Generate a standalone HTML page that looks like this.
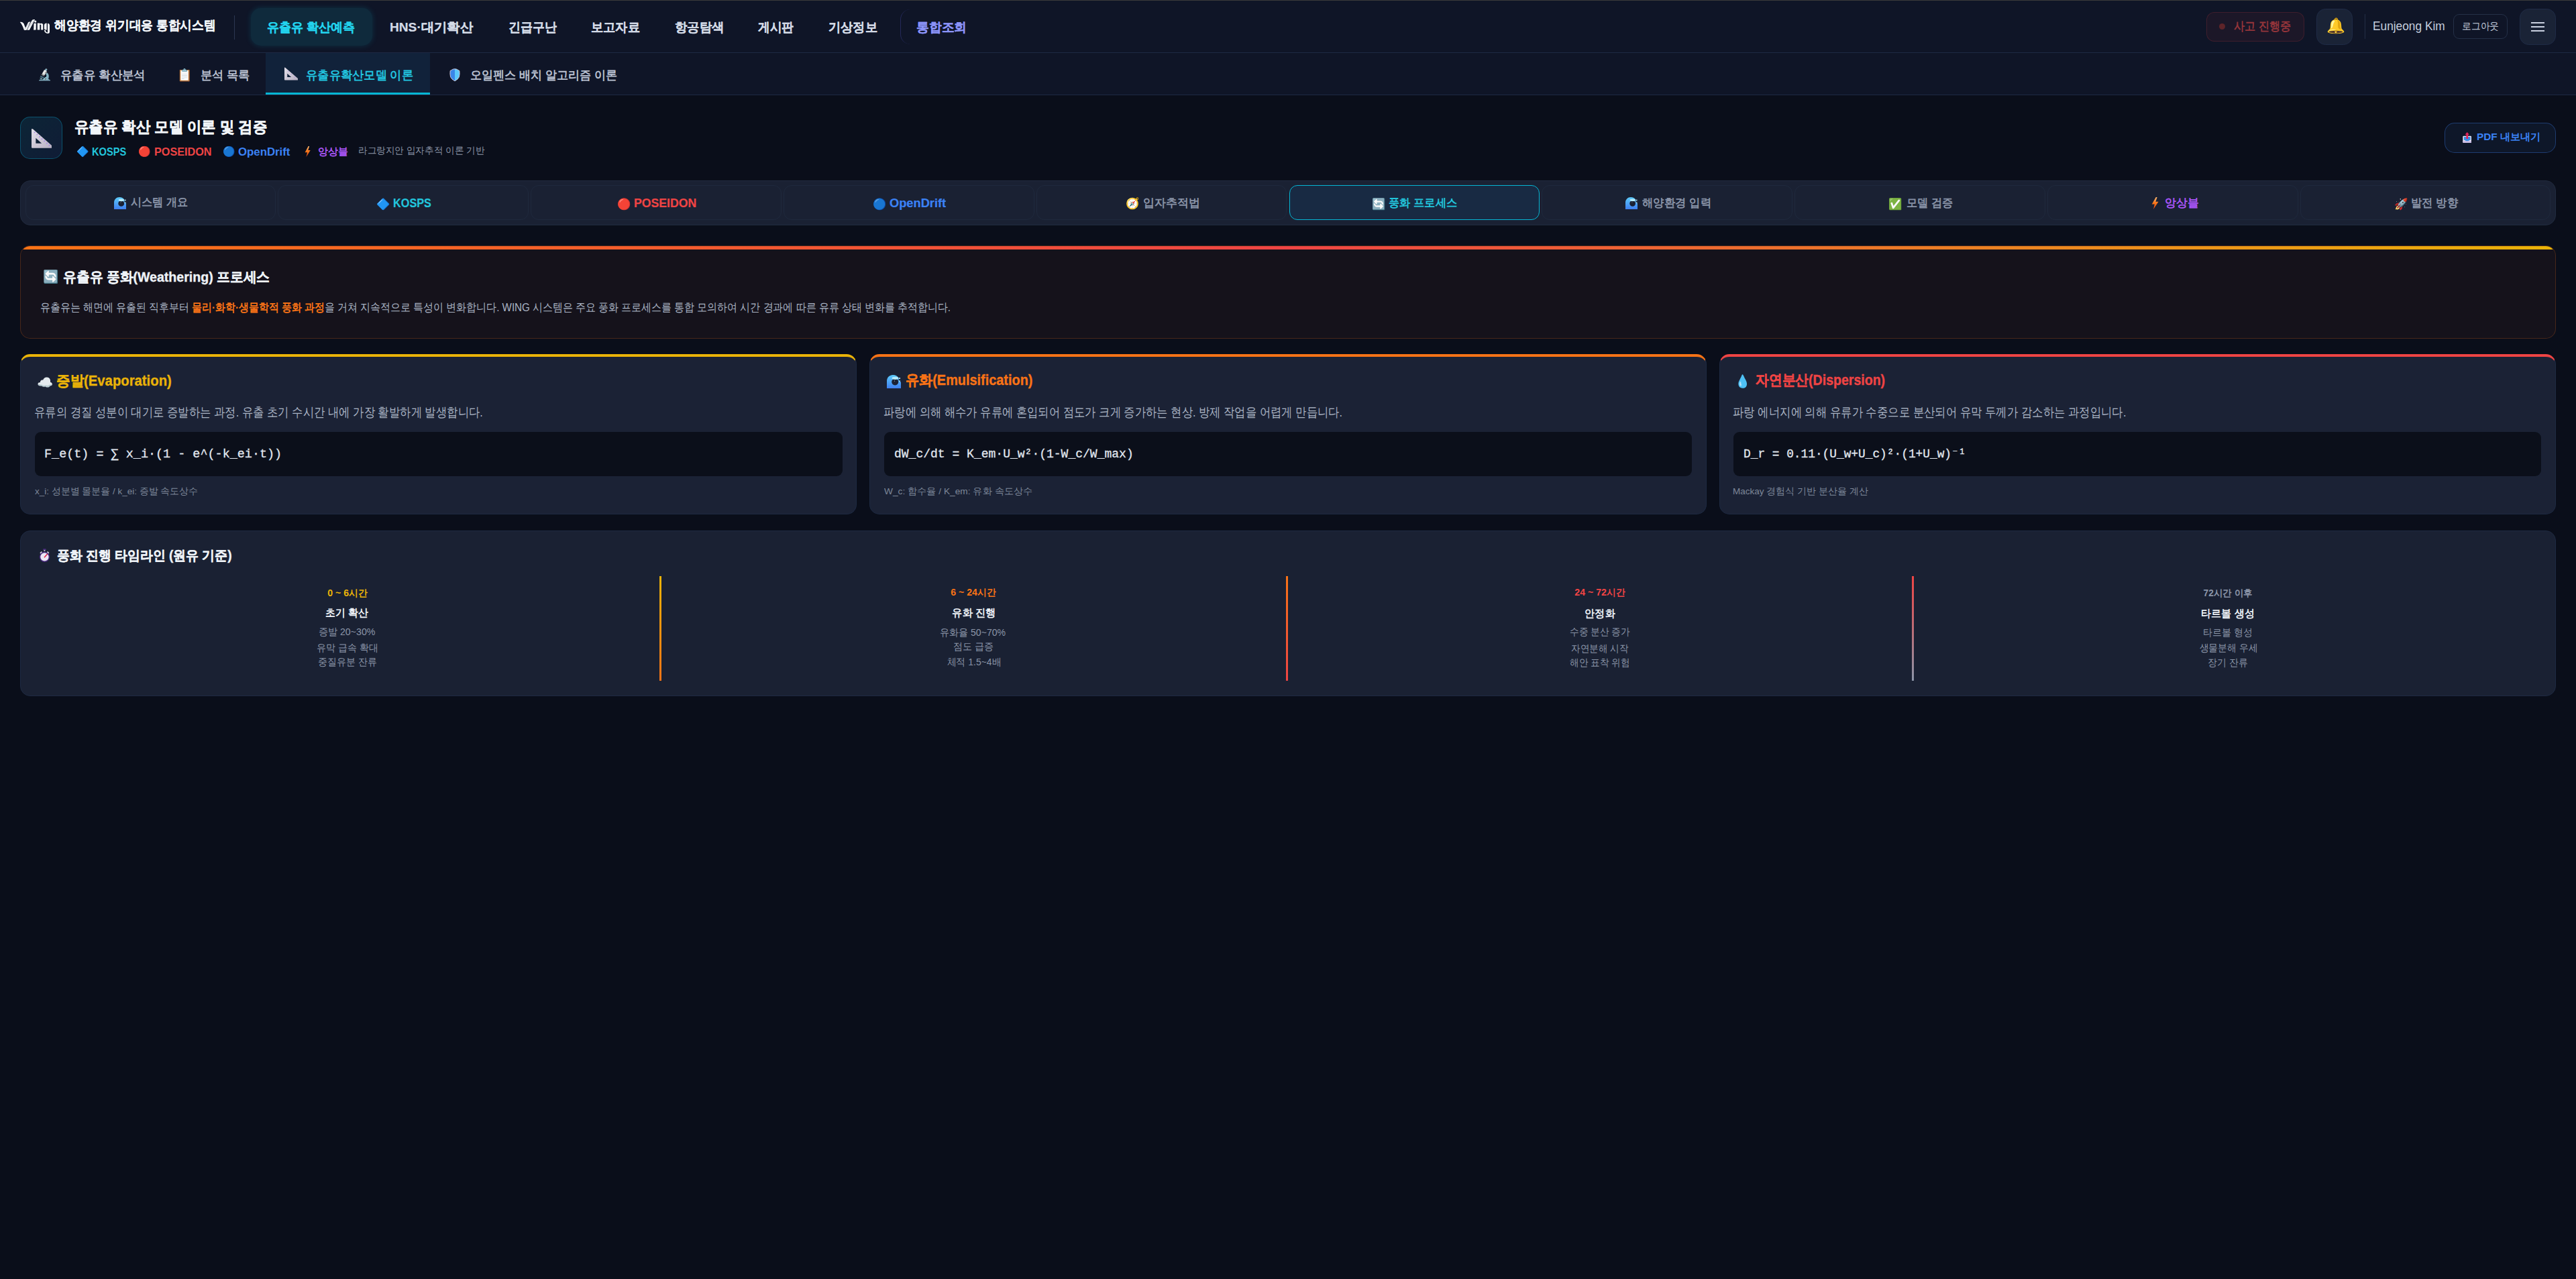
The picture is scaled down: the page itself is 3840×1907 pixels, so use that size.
<!DOCTYPE html>
<html lang="ko">
<head>
<meta charset="utf-8">
<title>WING 유출유 확산 모델 이론 및 검증</title>
<style>
html{zoom:1.5;}
*{box-sizing:border-box;margin:0;padding:0;}
body{width:2560px;height:1271.4px;overflow:hidden;background:#0a0e1a;font-family:"Liberation Sans",sans-serif;color:#e2e8f0;position:relative;}
.abs{position:absolute;}
.t{position:absolute;white-space:nowrap;}
#topline{position:absolute;left:0;top:0;width:2560px;height:0.67px;background:#3b3b3b;z-index:5;}
#hdr{position:absolute;left:0;top:0;width:2560px;height:52.7px;background:#0f1527;border-bottom:1px solid #1d2944;}
#subnav{position:absolute;left:0;top:52.7px;width:2560px;height:41.7px;background:#0f1527;border-bottom:1px solid #1d2944;}
.tab{position:absolute;top:184.3px;width:249.2px;height:34.7px;border-radius:8px;border:1px solid #1f293d;}
.tab.act{border-color:#06b6d4;background:#182a43;}
.card{position:absolute;top:352px;width:831.6px;height:159px;border-radius:10px;border:1px solid #1e2a42;border-top:3px solid;background:#1b2235;}
.code{position:absolute;top:429.5px;width:802.7px;height:43.7px;border-radius:6px;background:#0b0f1a;}
.tline{position:absolute;top:572.4px;width:2px;height:104.6px;}
</style>
</head>
<body>
<div id="topline"></div>
<div id="hdr">
  <svg class="abs" style="left:17.33px;top:16px" width="36" height="20" viewBox="0 0 2302 1279">
    <g fill="#f8fafc">
      <path d="M160,385 C240,360 330,380 400,470 L560,870 C520,895 460,900 420,885 C360,700 290,520 160,385 Z"/>
      <path d="M440,880 L580,880 L830,365 C780,350 730,360 690,385 Z"/>
      <path d="M600,885 L760,880 C880,660 1000,420 1115,225 C1050,200 980,215 940,250 C830,440 700,690 600,885 Z"/>
      <circle cx="1140" cy="345" r="68"/>
      <path d="M1045,455 L1185,455 L1175,875 L1030,885 Z"/>
      <path d="M1270,450 L1420,450 L1420,485 Q1530,420 1630,520 L1630,875 L1500,875 L1500,580 Q1470,520 1420,545 L1420,875 L1270,875 Z"/>
      <path d="M1860,445 Q1700,450 1700,600 L1700,800 Q1710,880 1860,885 Z"/>
      <path d="M1920,455 Q2040,470 2045,560 L2045,1020 Q2040,1105 1930,1105 Q1720,1105 1700,900 L1780,900 Q1800,1040 1920,1040 Z"/>
    </g>
    <g stroke="#0f1527" stroke-width="12" fill="none" opacity="0.8">
      <path d="M430,870 L800,380"/><path d="M610,880 L1060,250"/>
    </g>
  </svg>
  <div class="abs" style="left:232.5px;top:15px;width:1px;height:24px;background:#2b3752"></div>
  <div class="abs" style="left:249px;top:8px;width:121px;height:37px;border-radius:10px;background:#0f2a3c;box-shadow:0 0 6px rgba(6,182,212,0.18)"></div>
  <div class="abs" style="left:894.5px;top:9px;width:20px;height:35px;border-left:1px solid rgba(99,102,241,0.25);border-radius:10px 0 0 10px"></div>
  <div class="abs" style="left:2192.6px;top:12px;width:97.3px;height:29px;border:1px solid rgba(239,68,68,0.17);background:rgba(239,68,68,0.06);border-radius:8px"></div>
  <div class="abs" style="left:2205.5px;top:23.2px;width:6px;height:6px;border-radius:50%;background:#5e2429"></div>
  <div class="abs" style="left:2302px;top:8.6px;width:36px;height:36px;border-radius:9px;background:#1a2336;border:1px solid #1f2b46"></div>
  <div class="abs" style="left:2350.3px;top:14px;width:0.67px;height:24.5px;background:#222d45"></div>
  <div class="abs" style="left:2438px;top:14px;width:54px;height:24.5px;border-radius:6px;border:1px solid #243047"></div>
  <div class="abs" style="left:2504px;top:8.6px;width:36px;height:36px;border-radius:9px;background:#1a2336;border:1px solid #1f2b46"></div>
  <div class="abs" style="left:2515.2px;top:22.2px;width:13.7px;height:1.3px;background:#c9d0e0"></div>
  <div class="abs" style="left:2515.2px;top:25.9px;width:13.7px;height:1.3px;background:#c9d0e0"></div>
  <div class="abs" style="left:2515.2px;top:30.0px;width:13.7px;height:1.3px;background:#c9d0e0"></div>
</div>
<div id="subnav">
  <div class="abs" style="left:263.9px;top:0;width:163.4px;height:40.7px;background:#11223a"></div>
  <div class="abs" style="left:263.9px;top:39.2px;width:163.4px;height:2px;background:#06b6d4"></div>
</div>

<!-- page header -->
<div class="abs" style="left:20px;top:116px;width:42px;height:42px;border-radius:10px;border:1px solid rgba(8,145,178,0.45);background:linear-gradient(135deg,#0c2536,#101c36)"></div>
<div class="abs" style="left:2429.3px;top:122px;width:110.7px;height:30px;border-radius:10px;border:1px solid rgba(59,130,246,0.35);background:#0e1729"></div>

<!-- tab bar -->
<div class="abs" style="left:20px;top:179.3px;width:2520px;height:44.7px;border-radius:10px;border:1px solid #212b3f;background:#1a2133"></div>
<div class="tab" style="left:25px"></div>
<div class="tab" style="left:276.2px"></div>
<div class="tab" style="left:527.4px"></div>
<div class="tab" style="left:778.6px"></div>
<div class="tab" style="left:1029.8px"></div>
<div class="tab act" style="left:1281px"></div>
<div class="tab" style="left:1532.2px"></div>
<div class="tab" style="left:1783.4px"></div>
<div class="tab" style="left:2034.6px"></div>
<div class="tab" style="left:2285.8px"></div>

<!-- banner -->
<div class="abs" style="left:20px;top:244.2px;width:2520px;height:92.2px;border-radius:10px;border:1px solid rgba(249,115,22,0.22);background:#15121b;overflow:hidden">
  <div class="abs" style="left:0;top:0;width:100%;height:3px;background:linear-gradient(90deg,#f97316,#ef4444 50%,#eab308)"></div>
</div>

<!-- cards -->
<div class="card" style="left:20px;border-top-color:#eab308"></div>
<div class="card" style="left:864.2px;border-top-color:#f97316"></div>
<div class="card" style="left:1708.4px;border-top-color:#ef4444"></div>
<div class="code" style="left:34.5px"></div>
<div class="code" style="left:878.7px"></div>
<div class="code" style="left:1722.9px"></div>

<!-- timeline -->
<div class="abs" style="left:20px;top:527.3px;width:2520px;height:164.5px;border-radius:10px;background:#1a2133;border:1px solid #1e2a42"></div>
<div class="tline" style="left:655.3px;background:linear-gradient(#eab308,#f97316)"></div>
<div class="tline" style="left:1277.7px;background:linear-gradient(#f97316,#ef4444)"></div>
<div class="tline" style="left:1900.2px;background:linear-gradient(#ef4444,#8b95a8)"></div>


<!-- svg icons -->
<svg class="abs" style="left:31.07px;top:127.33px" width="20.2" height="19.8" viewBox="0 0 100 100" preserveAspectRatio="none">
  <defs><linearGradient id="tg1" x1="0" y1="0" x2="1" y2="1"><stop offset="0" stop-color="#e4e0ea"/><stop offset="1" stop-color="#b7b0c2"/></linearGradient></defs>
  <path d="M0,8 Q0,0 7,5 L98,86 Q100,90 100,94 L100,100 L4,100 Q0,100 0,96 Z M21,50 L21,77 L50,77 Z" fill="url(#tg1)" fill-rule="evenodd"/>
  <g stroke="#9f7aea" stroke-width="3.5"><path d="M18,19 L13,24"/><path d="M30,30 L25,35"/><path d="M42,41 L37,46"/><path d="M54,52 L49,57"/><path d="M66,63 L61,68"/><path d="M78,74 L73,79"/><path d="M90,85 L85,90"/></g>
</svg>
<svg class="abs" style="left:282.6px;top:66.87px" width="13.53" height="13.07" viewBox="0 0 100 100" preserveAspectRatio="none">
  <path d="M0,8 Q0,0 7,5 L98,86 Q100,90 100,94 L100,100 L4,100 Q0,100 0,96 Z M21,50 L21,77 L50,77 Z" fill="url(#tg1)" fill-rule="evenodd"/>
  <g stroke="#9f7aea" stroke-width="4"><path d="M30,30 L24,36"/><path d="M54,52 L48,58"/><path d="M78,74 L72,80"/></g>
</svg>
<svg class="abs" style="left:446.67px;top:68px" width="10.67" height="13.33" viewBox="0 0 100 125">
  <path d="M50,5 L50,118 Q20,102 10,80 Q3,52 7,22 L22,14 Q32,5 50,5 Z" fill="#3a86e8"/>
  <path d="M50,5 Q68,5 78,14 L93,22 Q97,52 90,80 Q80,102 50,118 Z" fill="#5bc8fb"/>
  <path d="M50,5 Q68,5 78,14 L93,22 Q97,52 90,80 Q80,102 50,118 Q20,102 10,80 Q3,52 7,22 L22,14 Q32,5 50,5 Z" fill="none" stroke="#cfcbe0" stroke-width="6"/>
</svg>
<svg class="abs" style="left:38.67px;top:545.33px" width="11.2" height="13.8" viewBox="0 0 100 124">
  <rect x="36" y="2" width="28" height="10" rx="5" fill="#4a2d7c"/>
  <rect x="44" y="12" width="12" height="12" fill="#b9b4c6"/>
  <path d="M8,38 L22,24 L30,32 L16,46 Z" fill="#cfcadb"/><path d="M92,38 L78,24 L70,32 L84,46 Z" fill="#cfcadb"/>
  <circle cx="50" cy="74" r="46" fill="#4b2c7f"/>
  <circle cx="50" cy="74" r="37" fill="#ebe7f4"/>
  <path d="M50,76 L74,50" stroke="#e11d48" stroke-width="9" stroke-linecap="round"/>
</svg>
<svg class="abs" style="left:302.5px;top:145.47px" width="6.2" height="10.67" viewBox="0 0 60 100" preserveAspectRatio="none">
  <defs><linearGradient id="bolt" x1="0" y1="0" x2="0" y2="1"><stop offset="0" stop-color="#fdba74"/><stop offset="0.5" stop-color="#f97316"/><stop offset="1" stop-color="#ea4a1a"/></linearGradient></defs>
  <path d="M36,0 L4,58 L26,58 L16,100 L56,38 L34,38 L46,0 Z" fill="url(#bolt)"/>
</svg>
<svg class="abs" style="left:2137.73px;top:196px" width="7.53" height="12" viewBox="0 0 60 100" preserveAspectRatio="none">
  <path d="M36,0 L4,58 L26,58 L16,100 L56,38 L34,38 L46,0 Z" fill="url(#bolt)"/>
</svg>

<svg class="abs" style="left:2447.3px;top:131.33px" width="9" height="10.87" viewBox="0 0 90 108">
  <rect x="2" y="38" width="86" height="68" rx="8" fill="#ece8f3"/>
  <rect x="2" y="86" width="86" height="20" rx="6" fill="#cdbfe6"/>
  <path d="M12,46 L78,46 L78,78 Q62,78 58,88 L32,88 Q28,78 12,78 Z" fill="#3a8ee6"/>
  <path d="M45,0 L66,24 L54,24 L54,66 L36,66 L36,24 L24,24 Z" fill="#e3245c"/>
</svg>
<svg class="abs" style="left:113.27px;top:196px" width="12.33" height="12.07" viewBox="0 0 100 100" preserveAspectRatio="none"><defs><linearGradient id="wg" x1="0" y1="0" x2="0" y2="1"><stop offset="0" stop-color="#5ccbfa"/><stop offset="1" stop-color="#3f7ff0"/></linearGradient></defs>
  <path fill-rule="evenodd" fill="url(#wg)" d="M0,100 L0,45 C0,18 20,0 43,0 C62,0 76,9 84,22 L84,40 L100,55 L100,100 Z M58,52 m-24,0 a24,24 0 1,0 48,0 a24,24 0 1,0 -48,0 Z"/>
  <ellipse cx="59" cy="24" rx="23" ry="10" fill="#b6ebfb"/>
  <rect x="86" y="20" width="9" height="10" fill="#a8e2f6"/><rect x="86" y="41" width="9" height="10" fill="#8fd3f2"/>
  <circle cx="54" cy="44" r="2.5" fill="#cfefff"/></svg>
<svg class="abs" style="left:1615.2px;top:196px" width="12.27" height="12" viewBox="0 0 100 100" preserveAspectRatio="none"><defs><linearGradient id="wg2" x1="0" y1="0" x2="0" y2="1"><stop offset="0" stop-color="#5ccbfa"/><stop offset="1" stop-color="#3f7ff0"/></linearGradient></defs>
  <path fill-rule="evenodd" fill="url(#wg2)" d="M0,100 L0,45 C0,18 20,0 43,0 C62,0 76,9 84,22 L84,40 L100,55 L100,100 Z M58,52 m-24,0 a24,24 0 1,0 48,0 a24,24 0 1,0 -48,0 Z"/>
  <ellipse cx="59" cy="24" rx="23" ry="10" fill="#b6ebfb"/>
  <rect x="86" y="20" width="9" height="10" fill="#a8e2f6"/><rect x="86" y="41" width="9" height="10" fill="#8fd3f2"/>
  <circle cx="54" cy="44" r="2.5" fill="#cfefff"/></svg>
<svg class="abs" style="left:881.27px;top:372.5px" width="14.07" height="13.5" viewBox="0 0 100 100" preserveAspectRatio="none"><defs><linearGradient id="wg3" x1="0" y1="0" x2="0" y2="1"><stop offset="0" stop-color="#5ccbfa"/><stop offset="1" stop-color="#3f7ff0"/></linearGradient></defs>
  <path fill-rule="evenodd" fill="url(#wg3)" d="M0,100 L0,45 C0,18 20,0 43,0 C62,0 76,9 84,22 L84,40 L100,55 L100,100 Z M58,52 m-24,0 a24,24 0 1,0 48,0 a24,24 0 1,0 -48,0 Z"/>
  <ellipse cx="59" cy="24" rx="23" ry="10" fill="#b6ebfb"/>
  <rect x="86" y="20" width="9" height="10" fill="#a8e2f6"/><rect x="86" y="41" width="9" height="10" fill="#8fd3f2"/>
  <circle cx="54" cy="44" r="2.5" fill="#cfefff"/></svg>
<div class="t" id="h_title" style="left:54.27px;top:15.50px;font-size:12.60px;line-height:20px;height:20px;letter-spacing:0.000px;transform:scaleX(0.9351);transform-origin:0 50%;-webkit-text-stroke-width:0.15px;font-weight:700;color:#f1f5f9;">해양환경 위기대응 통합시스템</div>
<div class="t" id="nav1" style="left:265.07px;top:17.33px;font-size:12.50px;line-height:20px;height:20px;letter-spacing:0.000px;transform:scaleX(0.9520);transform-origin:0 50%;-webkit-text-stroke-width:0.15px;font-weight:700;color:#22d3ee;">유출유 확산예측</div>
<div class="t" id="nav2" style="left:387.00px;top:17.00px;font-size:12.50px;line-height:20px;height:20px;letter-spacing:0.000px;transform:scaleX(1.0199);transform-origin:0 50%;-webkit-text-stroke-width:0.15px;font-weight:700;color:#d3dae6;">HNS·대기확산</div>
<div class="t" id="nav3" style="left:505.00px;top:17.00px;font-size:12.50px;line-height:20px;height:20px;letter-spacing:0.000px;transform:scaleX(0.9459);transform-origin:0 50%;-webkit-text-stroke-width:0.15px;font-weight:700;color:#d3dae6;">긴급구난</div>
<div class="t" id="nav4" style="left:587.00px;top:17.00px;font-size:12.50px;line-height:20px;height:20px;letter-spacing:0.000px;transform:scaleX(0.9588);transform-origin:0 50%;-webkit-text-stroke-width:0.15px;font-weight:700;color:#d3dae6;">보고자료</div>
<div class="t" id="nav5" style="left:670.87px;top:17.00px;font-size:12.50px;line-height:20px;height:20px;letter-spacing:0.000px;transform:scaleX(0.9707);transform-origin:0 50%;-webkit-text-stroke-width:0.15px;font-weight:700;color:#d3dae6;">항공탐색</div>
<div class="t" id="nav6" style="left:753.53px;top:17.00px;font-size:12.50px;line-height:20px;height:20px;letter-spacing:0.000px;transform:scaleX(0.9318);transform-origin:0 50%;-webkit-text-stroke-width:0.15px;font-weight:700;color:#d3dae6;">게시판</div>
<div class="t" id="nav7" style="left:823.60px;top:17.00px;font-size:12.50px;line-height:20px;height:20px;letter-spacing:0.000px;transform:scaleX(0.9602);transform-origin:0 50%;-webkit-text-stroke-width:0.15px;font-weight:700;color:#d3dae6;">기상정보</div>
<div class="t" id="nav8" style="left:910.67px;top:17.00px;font-size:12.50px;line-height:20px;height:20px;letter-spacing:0.000px;transform:scaleX(0.9883);transform-origin:0 50%;-webkit-text-stroke-width:0.15px;font-weight:700;color:#8b93f8;">통합조회</div>
<div class="t" id="acc" style="left:2219.87px;top:15.87px;font-size:12.00px;line-height:20px;height:20px;letter-spacing:0.000px;transform:scaleX(0.8970);transform-origin:0 50%;-webkit-text-stroke-width:0.00px;font-weight:700;color:#93343a;">사고 진행중</div>
<div class="t" id="bell" style="left:2311.93px;top:16.33px;font-size:15.00px;line-height:20px;height:20px;">🔔</div>
<div class="t" id="user" style="left:2358.23px;top:16.33px;font-size:12.12px;line-height:20px;height:20px;letter-spacing:0.000px;transform:scaleX(0.9519);transform-origin:0 50%;color:#c5cede;">Eunjeong Kim</div>
<div class="t" id="logout" style="left:2446.47px;top:15.97px;font-size:10.00px;line-height:20px;height:20px;letter-spacing:0.000px;transform:scaleX(0.9188);transform-origin:0 50%;color:#c5cede;">로그아웃</div>
<div class="t" id="sn1" style="left:59.73px;top:64.53px;font-size:11.80px;line-height:20px;height:20px;letter-spacing:0.000px;transform:scaleX(0.9689);transform-origin:0 50%;-webkit-text-stroke-width:0.00px;font-weight:700;color:#b8c0d0;">유출유 확산분석</div>
<div class="t" id="sn2" style="left:199.30px;top:64.53px;font-size:11.80px;line-height:20px;height:20px;letter-spacing:0.000px;transform:scaleX(0.9551);transform-origin:0 50%;-webkit-text-stroke-width:0.00px;font-weight:700;color:#b8c0d0;">분석 목록</div>
<div class="t" id="sn3" style="left:304.00px;top:64.53px;font-size:11.80px;line-height:20px;height:20px;letter-spacing:0.000px;transform:scaleX(0.9584);transform-origin:0 50%;-webkit-text-stroke-width:0.00px;font-weight:700;color:#22c5e0;">유출유확산모델 이론</div>
<div class="t" id="sn4" style="left:467.30px;top:64.53px;font-size:11.80px;line-height:20px;height:20px;letter-spacing:0.000px;transform:scaleX(0.9494);transform-origin:0 50%;-webkit-text-stroke-width:0.00px;font-weight:700;color:#b8c0d0;">오일펜스 배치 알고리즘 이론</div>
<div class="t" id="sn1e" style="left:37.43px;top:64.77px;font-size:11.32px;line-height:20px;height:20px;">🔬</div>
<div class="t" id="sn2e" style="left:176.03px;top:64.43px;font-size:12.00px;line-height:20px;height:20px;">📋</div>
<div class="t" id="ph_title" style="left:74.23px;top:116.10px;font-size:15.50px;line-height:20px;height:20px;letter-spacing:0.000px;transform:scaleX(0.9310);transform-origin:0 50%;-webkit-text-stroke-width:0.35px;font-weight:700;color:#f1f5f9;">유출유 확산 모델 이론 및 검증</div>
<div class="t" id="b1e" style="left:75.80px;top:140.83px;font-size:10.00px;line-height:20px;height:20px;">🔷</div>
<div class="t" id="b1" style="left:91.53px;top:140.53px;font-size:11.00px;line-height:20px;height:20px;letter-spacing:0.000px;transform:scaleX(0.8887);transform-origin:0 50%;-webkit-text-stroke-width:0.00px;font-weight:700;color:#22c5dc;">KOSPS</div>
<div class="t" id="b2e" style="left:137.60px;top:140.83px;font-size:10.00px;line-height:20px;height:20px;">🔴</div>
<div class="t" id="b2" style="left:153.17px;top:140.53px;font-size:11.00px;line-height:20px;height:20px;letter-spacing:0.000px;transform:scaleX(0.9821);transform-origin:0 50%;-webkit-text-stroke-width:0.00px;font-weight:700;color:#ef4444;">POSEIDON</div>
<div class="t" id="b3e" style="left:221.23px;top:140.83px;font-size:10.00px;line-height:20px;height:20px;">🔵</div>
<div class="t" id="b3" style="left:236.93px;top:140.53px;font-size:11.00px;line-height:20px;height:20px;letter-spacing:0.000px;transform:scaleX(1.0180);transform-origin:0 50%;-webkit-text-stroke-width:0.00px;font-weight:700;color:#3b82f6;">OpenDrift</div>
<div class="t" id="b4" style="left:316.00px;top:140.67px;font-size:10.00px;line-height:20px;height:20px;letter-spacing:0.000px;transform:scaleX(0.9933);transform-origin:0 50%;-webkit-text-stroke-width:0.00px;font-weight:700;color:#a855f7;">앙상블</div>
<div class="t" id="b5" style="left:355.97px;top:139.53px;font-size:9.50px;line-height:20px;height:20px;letter-spacing:0.000px;transform:scaleX(0.9716);transform-origin:0 50%;color:#8a94a6;">라그랑지안 입자추적 이론 기반</div>
<div class="t" id="pdf" style="left:2461.57px;top:126.20px;font-size:10.13px;line-height:20px;height:20px;letter-spacing:0.000px;transform:scaleX(1.0089);transform-origin:0 50%;-webkit-text-stroke-width:0.00px;font-weight:700;color:#3b82f6;">PDF 내보내기</div>
<div class="t" id="t1" style="left:130.13px;top:190.87px;font-size:11.60px;line-height:20px;height:20px;letter-spacing:0.000px;transform:scaleX(0.9491);transform-origin:0 50%;-webkit-text-stroke-width:0.00px;font-weight:700;color:#8892a6;">시스템 개요</div>
<div class="t" id="t2e" style="left:374.27px;top:192.43px;font-size:11.00px;line-height:20px;height:20px;">🔷</div>
<div class="t" id="t2" style="left:390.93px;top:192.30px;font-size:12.80px;line-height:20px;height:20px;letter-spacing:0.000px;transform:scaleX(0.8473);transform-origin:0 50%;-webkit-text-stroke-width:0.15px;font-weight:700;color:#22c5dc;">KOSPS</div>
<div class="t" id="t3e" style="left:613.20px;top:192.43px;font-size:11.00px;line-height:20px;height:20px;">🔴</div>
<div class="t" id="t3" style="left:630.13px;top:192.30px;font-size:12.80px;line-height:20px;height:20px;letter-spacing:0.000px;transform:scaleX(0.9200);transform-origin:0 50%;-webkit-text-stroke-width:0.15px;font-weight:700;color:#ef4444;">POSEIDON</div>
<div class="t" id="t4e" style="left:867.47px;top:192.43px;font-size:11.00px;line-height:20px;height:20px;">🔵</div>
<div class="t" id="t4" style="left:884.27px;top:191.67px;font-size:12.80px;line-height:20px;height:20px;letter-spacing:0.000px;transform:scaleX(0.9511);transform-origin:0 50%;-webkit-text-stroke-width:0.15px;font-weight:700;color:#3b82f6;">OpenDrift</div>
<div class="t" id="t5e" style="left:1118.80px;top:192.10px;font-size:11.00px;line-height:20px;height:20px;">🧭</div>
<div class="t" id="t5" style="left:1135.73px;top:191.03px;font-size:11.60px;line-height:20px;height:20px;letter-spacing:0.000px;-webkit-text-stroke-width:0.00px;font-weight:700;color:#8892a6;">입자추적법</div>
<div class="t" id="t6e" style="left:1363.33px;top:192.43px;font-size:11.00px;line-height:20px;height:20px;">🔄</div>
<div class="t" id="t6" style="left:1380.27px;top:191.03px;font-size:11.60px;line-height:20px;height:20px;letter-spacing:0.000px;transform:scaleX(0.9577);transform-origin:0 50%;-webkit-text-stroke-width:0.00px;font-weight:700;color:#22c5dc;">풍화 프로세스</div>
<div class="t" id="t7" style="left:1632.00px;top:191.03px;font-size:11.60px;line-height:20px;height:20px;letter-spacing:0.000px;transform:scaleX(0.9633);transform-origin:0 50%;-webkit-text-stroke-width:0.00px;font-weight:700;color:#8892a6;">해양환경 입력</div>
<div class="t" id="t8e" style="left:1876.80px;top:192.43px;font-size:11.00px;line-height:20px;height:20px;">✅</div>
<div class="t" id="t8" style="left:1894.67px;top:191.03px;font-size:11.60px;line-height:20px;height:20px;letter-spacing:0.000px;transform:scaleX(0.9570);transform-origin:0 50%;-webkit-text-stroke-width:0.00px;font-weight:700;color:#8892a6;">모델 검증</div>
<div class="t" id="t9" style="left:2151.60px;top:191.03px;font-size:11.60px;line-height:20px;height:20px;letter-spacing:0.000px;transform:scaleX(0.9925);transform-origin:0 50%;-webkit-text-stroke-width:0.00px;font-weight:700;color:#a855f7;">앙상블</div>
<div class="t" id="t10e" style="left:2379.33px;top:192.43px;font-size:11.00px;line-height:20px;height:20px;">🚀</div>
<div class="t" id="t10" style="left:2396.27px;top:191.03px;font-size:11.60px;line-height:20px;height:20px;letter-spacing:0.000px;transform:scaleX(0.9599);transform-origin:0 50%;-webkit-text-stroke-width:0.00px;font-weight:700;color:#8892a6;">발전 방향</div>
<div class="t" id="bn_e" style="left:42.87px;top:265.53px;font-size:12.61px;line-height:20px;height:20px;">🔄</div>
<div class="t" id="bn_title" style="left:62.67px;top:265.53px;font-size:13.84px;line-height:20px;height:20px;letter-spacing:0.000px;transform:scaleX(0.9429);transform-origin:0 50%;-webkit-text-stroke-width:0.25px;font-weight:700;color:#eef2f7;">유출유 풍화(Weathering) 프로세스</div>
<div class="t" id="bn_desc" style="left:40.20px;top:295.33px;font-size:11.50px;line-height:20px;height:20px;letter-spacing:0.000px;transform:scaleX(0.8794);transform-origin:0 50%;color:#aab4c4;">유출유는 해면에 유출된 직후부터 <b style="color:#f97316">물리·화학·생물학적 풍화 과정</b>을 거쳐 지속적으로 특성이 변화합니다. WING 시스템은 주요 풍화 프로세스를 통합 모의하여 시간 경과에 따른 유류 상태 변화를 추적합니다.</div>
<div class="t" id="c1e" style="left:36.63px;top:369.80px;font-size:13.03px;line-height:20px;height:20px;">☁️</div>
<div class="t" id="c1t" style="left:56.20px;top:368.83px;font-size:14.50px;line-height:20px;height:20px;letter-spacing:0.000px;transform:scaleX(0.9327);transform-origin:0 50%;-webkit-text-stroke-width:0.25px;font-weight:700;color:#eab308;">증발(Evaporation)</div>
<div class="t" id="c1d" style="left:34.20px;top:400.00px;font-size:12.50px;line-height:20px;height:20px;letter-spacing:0.000px;transform:scaleX(0.8619);transform-origin:0 50%;color:#aab4c4;">유류의 경질 성분이 대기로 증발하는 과정. 유출 초기 수시간 내에 가장 활발하게 발생합니다.</div>
<div class="t" id="c1c" style="left:44.03px;top:441.10px;font-size:12.50px;line-height:20px;height:20px;letter-spacing:0.000px;transform:scaleX(0.9837);transform-origin:0 50%;font-family:'Liberation Mono',monospace;color:#e2e8f0;-webkit-text-stroke-width:0.2px;">F_e(t) = ∑ x_i·(1 - e^(-k_ei·t))</div>
<div class="t" id="c1f" style="left:34.87px;top:478.67px;font-size:9.00px;line-height:20px;height:20px;letter-spacing:0.000px;transform:scaleX(0.9980);transform-origin:0 50%;color:#7d8799;">x_i: 성분별 몰분율 / k_ei: 증발 속도상수</div>
<div class="t" id="c2t" style="left:900.27px;top:368.10px;font-size:14.50px;line-height:20px;height:20px;letter-spacing:0.000px;transform:scaleX(0.9145);transform-origin:0 50%;-webkit-text-stroke-width:0.25px;font-weight:700;color:#f97316;">유화(Emulsification)</div>
<div class="t" id="c2d" style="left:878.07px;top:399.77px;font-size:12.50px;line-height:20px;height:20px;letter-spacing:0.000px;transform:scaleX(0.8605);transform-origin:0 50%;color:#aab4c4;">파랑에 의해 해수가 유류에 혼입되어 점도가 크게 증가하는 현상. 방제 작업을 어렵게 만듭니다.</div>
<div class="t" id="c2c" style="left:888.70px;top:441.43px;font-size:12.50px;line-height:20px;height:20px;letter-spacing:0.000px;transform:scaleX(0.9607);transform-origin:0 50%;font-family:'Liberation Mono',monospace;color:#e2e8f0;-webkit-text-stroke-width:0.2px;">dW_c/dt = K_em·U_w²·(1-W_c/W_max)</div>
<div class="t" id="c2f" style="left:878.73px;top:478.67px;font-size:9.00px;line-height:20px;height:20px;letter-spacing:0.000px;transform:scaleX(1.0139);transform-origin:0 50%;color:#7d8799;">W_c: 함수율 / K_em: 유화 속도상수</div>
<div class="t" id="c3e" style="left:1724.03px;top:369.47px;font-size:12.50px;line-height:20px;height:20px;">💧</div>
<div class="t" id="c3t" style="left:1744.47px;top:368.10px;font-size:14.50px;line-height:20px;height:20px;letter-spacing:0.000px;transform:scaleX(0.8986);transform-origin:0 50%;-webkit-text-stroke-width:0.25px;font-weight:700;color:#ef4444;">자연분산(Dispersion)</div>
<div class="t" id="c3d" style="left:1722.13px;top:400.00px;font-size:12.50px;line-height:20px;height:20px;letter-spacing:0.000px;transform:scaleX(0.8635);transform-origin:0 50%;color:#aab4c4;">파랑 에너지에 의해 유류가 수중으로 분산되어 유막 두께가 감소하는 과정입니다.</div>
<div class="t" id="c3c" style="left:1732.83px;top:441.10px;font-size:12.50px;line-height:20px;height:20px;letter-spacing:0.000px;transform:scaleX(0.9501);transform-origin:0 50%;font-family:'Liberation Mono',monospace;color:#e2e8f0;-webkit-text-stroke-width:0.2px;">D_r = 0.11·(U_w+U_c)²·(1+U_w)⁻¹</div>
<div class="t" id="c3f" style="left:1722.13px;top:478.67px;font-size:9.00px;line-height:20px;height:20px;letter-spacing:0.000px;transform:scaleX(1.0015);transform-origin:0 50%;color:#7d8799;">Mackay 경험식 기반 분산율 계산</div>
<div class="t" id="tl_title" style="left:56.40px;top:541.83px;font-size:13.54px;line-height:20px;height:20px;letter-spacing:0.000px;transform:scaleX(0.9441);transform-origin:0 50%;-webkit-text-stroke-width:0.25px;font-weight:700;color:#eef2f7;">풍화 진행 타임라인 (원유 기준)</div>
<div class="t" id="tl0_0" style="left:195.00px;top:579.47px;font-size:9.50px;line-height:20px;height:20px;letter-spacing:0.000px;transform:scaleX(0.9897);transform-origin:50% 50%;width:300px;-webkit-text-stroke-width:0.00px;font-weight:700;color:#eab308;text-align:center;">0 ~ 6시간</div>
<div class="t" id="tl0_1" style="left:194.83px;top:598.87px;font-size:10.80px;line-height:20px;height:20px;letter-spacing:0.000px;transform:scaleX(0.9276);transform-origin:50% 50%;width:300px;-webkit-text-stroke-width:0.00px;font-weight:700;color:#eef2f7;text-align:center;">초기 확산</div>
<div class="t" id="tl0_2" style="left:194.83px;top:618.33px;font-size:10.00px;line-height:20px;height:20px;letter-spacing:0.000px;transform:scaleX(0.9476);transform-origin:50% 50%;width:300px;color:#8b95a8;text-align:center;">증발 20~30%</div>
<div class="t" id="tl0_3" style="left:195.17px;top:634.20px;font-size:10.00px;line-height:20px;height:20px;letter-spacing:0.000px;transform:scaleX(0.9292);transform-origin:50% 50%;width:300px;color:#8b95a8;text-align:center;">유막 급속 확대</div>
<div class="t" id="tl0_4" style="left:195.00px;top:647.67px;font-size:10.00px;line-height:20px;height:20px;letter-spacing:0.000px;transform:scaleX(0.9278);transform-origin:50% 50%;width:300px;color:#8b95a8;text-align:center;">중질유분 잔류</div>
<div class="t" id="tl1_0" style="left:817.50px;top:578.53px;font-size:9.50px;line-height:20px;height:20px;letter-spacing:0.000px;transform:scaleX(0.9929);transform-origin:50% 50%;width:300px;-webkit-text-stroke-width:0.00px;font-weight:700;color:#f97316;text-align:center;">6 ~ 24시간</div>
<div class="t" id="tl1_1" style="left:817.83px;top:598.60px;font-size:10.80px;line-height:20px;height:20px;letter-spacing:0.000px;transform:scaleX(0.9531);transform-origin:50% 50%;width:300px;-webkit-text-stroke-width:0.00px;font-weight:700;color:#eef2f7;text-align:center;">유화 진행</div>
<div class="t" id="tl1_2" style="left:816.83px;top:618.80px;font-size:10.00px;line-height:20px;height:20px;letter-spacing:0.000px;transform:scaleX(0.9391);transform-origin:50% 50%;width:300px;color:#8b95a8;text-align:center;">유화율 50~70%</div>
<div class="t" id="tl1_3" style="left:817.33px;top:632.87px;font-size:10.00px;line-height:20px;height:20px;letter-spacing:0.000px;transform:scaleX(0.9376);transform-origin:50% 50%;width:300px;color:#8b95a8;text-align:center;">점도 급증</div>
<div class="t" id="tl1_4" style="left:818.00px;top:648.27px;font-size:10.00px;line-height:20px;height:20px;letter-spacing:0.000px;transform:scaleX(0.9294);transform-origin:50% 50%;width:300px;color:#8b95a8;text-align:center;">체적 1.5~4배</div>
<div class="t" id="tl2_0" style="left:1440.17px;top:578.60px;font-size:9.50px;line-height:20px;height:20px;letter-spacing:0.000px;transform:scaleX(0.9917);transform-origin:50% 50%;width:300px;-webkit-text-stroke-width:0.00px;font-weight:700;color:#ef4444;text-align:center;">24 ~ 72시간</div>
<div class="t" id="tl2_1" style="left:1439.83px;top:599.07px;font-size:10.80px;line-height:20px;height:20px;letter-spacing:0.000px;transform:scaleX(0.9404);transform-origin:50% 50%;width:300px;-webkit-text-stroke-width:0.00px;font-weight:700;color:#eef2f7;text-align:center;">안정화</div>
<div class="t" id="tl2_2" style="left:1440.33px;top:618.20px;font-size:10.00px;line-height:20px;height:20px;letter-spacing:0.000px;transform:scaleX(0.9129);transform-origin:50% 50%;width:300px;color:#8b95a8;text-align:center;">수중 분산 증가</div>
<div class="t" id="tl2_3" style="left:1440.17px;top:634.40px;font-size:10.00px;line-height:20px;height:20px;letter-spacing:0.000px;transform:scaleX(0.9069);transform-origin:50% 50%;width:300px;color:#8b95a8;text-align:center;">자연분해 시작</div>
<div class="t" id="tl2_4" style="left:1440.33px;top:648.47px;font-size:10.00px;line-height:20px;height:20px;letter-spacing:0.000px;transform:scaleX(0.9090);transform-origin:50% 50%;width:300px;color:#8b95a8;text-align:center;">해안 표착 위험</div>
<div class="t" id="tl3_0" style="left:2064.00px;top:579.33px;font-size:9.50px;line-height:20px;height:20px;letter-spacing:0.000px;transform:scaleX(0.9630);transform-origin:50% 50%;width:300px;-webkit-text-stroke-width:0.00px;font-weight:700;color:#8b95a8;text-align:center;">72시간 이후</div>
<div class="t" id="tl3_1" style="left:2064.33px;top:599.07px;font-size:10.80px;line-height:20px;height:20px;letter-spacing:0.000px;transform:scaleX(0.9355);transform-origin:50% 50%;width:300px;-webkit-text-stroke-width:0.00px;font-weight:700;color:#eef2f7;text-align:center;">타르볼 생성</div>
<div class="t" id="tl3_2" style="left:2064.00px;top:618.53px;font-size:10.00px;line-height:20px;height:20px;letter-spacing:0.000px;transform:scaleX(0.9296);transform-origin:50% 50%;width:300px;color:#8b95a8;text-align:center;">타르볼 형성</div>
<div class="t" id="tl3_3" style="left:2064.83px;top:633.73px;font-size:10.00px;line-height:20px;height:20px;letter-spacing:0.000px;transform:scaleX(0.9224);transform-origin:50% 50%;width:300px;color:#8b95a8;text-align:center;">생물분해 우세</div>
<div class="t" id="tl3_4" style="left:2063.67px;top:648.47px;font-size:10.00px;line-height:20px;height:20px;letter-spacing:0.000px;transform:scaleX(0.9249);transform-origin:50% 50%;width:300px;color:#8b95a8;text-align:center;">장기 잔류</div>
</body>
</html>
